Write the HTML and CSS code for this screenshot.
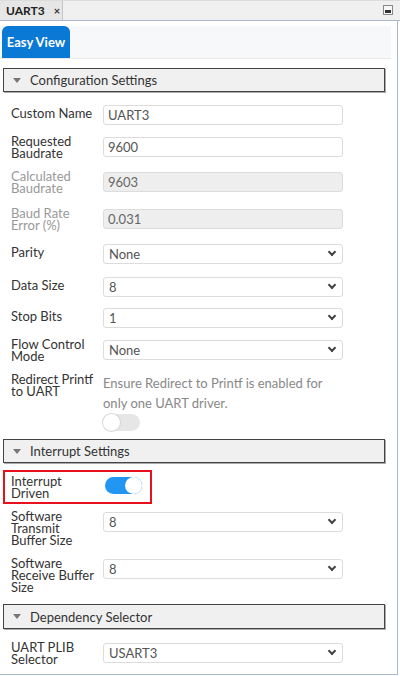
FILE: index.html
```html
<!DOCTYPE html>
<html>
<head>
<meta charset="utf-8">
<link rel="stylesheet" href="styles.css">
</head>
<body>
<div class="window">
  <div class="tabbar">
    <div class="tab"><span>UART3</span><span class="close">×</span></div>
    <div class="spacer"></div>
    <div class="minbtn"><span></span></div>
  </div>
  <div class="panel">
    <div class="viewbar"><div class="easyview">Easy View</div></div>

    <div class="section s-config"><span class="tri"></span>Configuration Settings</div>
    <div class="row g13"><div class="label one">Custom Name</div><div class="field">UART3</div></div>
    <div class="row g10"><div class="label">Requested Baudrate</div><div class="field f2">9600</div></div>
    <div class="row g11"><div class="label dis">Calculated Baudrate</div><div class="field f2 disabled">9603</div></div>
    <div class="row g13"><div class="label dis">Baud Rate Error (%)</div><div class="field f2 disabled">0.031</div></div>
    <div class="row g13"><div class="label one">Parity</div><div class="field select">None<i class="chev"></i></div></div>
    <div class="row g13"><div class="label one">Data Size</div><div class="field select">8<i class="chev"></i></div></div>
    <div class="row g11"><div class="label one">Stop Bits</div><div class="field select">1<i class="chev"></i></div></div>
    <div class="row g10"><div class="label">Flow Control Mode</div><div class="field select f2">None<i class="chev"></i></div></div>
    <div class="row g11"><div class="label">Redirect Printf to UART</div>
      <div class="redirect"><div class="help">Ensure Redirect to Printf is enabled for only one UART driver.</div><div class="toggle off"><span></span></div></div>
    </div>

    <div class="section s-int"><span class="tri"></span>Interrupt Settings</div>
    <div class="highlight"><div class="label">Interrupt Driven</div><div class="toggle on"><span></span></div></div>
    <div class="row g6"><div class="label">Software Transmit Buffer Size</div><div class="field select f2">8<i class="chev"></i></div></div>
    <div class="row g11"><div class="label">Software Receive Buffer Size</div><div class="field select f2">8<i class="chev"></i></div></div>

    <div class="section s-dep"><span class="tri"></span>Dependency Selector</div>
    <div class="row g12"><div class="label">UART PLIB Selector</div><div class="field select f2">USART3<i class="chev"></i></div></div>
  </div>
</div>
</body>
</html>
```
FILE: styles.css
```css
* { box-sizing: border-box; }
html, body { margin: 0; padding: 0; background: #fff; }
body { font-family: "Lato", "Open Sans", sans-serif; font-size: 13px; color: #333; }

.window { width: 400px; height: 676px; position: relative; }

.tabbar {
  height: 21px;
  display: flex;
  background: #f0f0f0;
  border-top: 1px solid #dcdcdc;
  border-bottom: 1px solid #a9bacd;
}
.tab {
  display: flex;
  align-items: center;
  gap: 9px;
  padding: 0 6px 0 6px;
  background: #e6e6e6;
  border-right: 1px solid #c4c4c4;
  font-weight: bold;
  font-size: 12px;
  color: #222;
  width: 63px;
}
.tab .close { font-size: 11px; font-weight: bold; color: #333; }
.spacer { flex: 1; }
.minbtn {
  width: 10px; height: 10px;
  margin: 4px 7px 0 0;
  border: 1px solid #888;
  background: #f8f8f8;
  position: relative;
}
.minbtn span {
  position: absolute; left: 1px; right: 1px; bottom: 1px; height: 3px; background: #333;
}

.panel {
  width: 398px;
  height: 654px;
  border-right: 1px solid #a9bacd;
  border-bottom: 1px solid #a9bacd;
  padding-top: 5px;
}

.viewbar {
  width: 391px;
  height: 33px;
  background: #f6f8fa;
  border-bottom: 1px solid #e6e8ea;
  display: flex;
  align-items: flex-end;
}
.easyview {
  margin-left: 2px;
  width: 68px;
  height: 32px;
  background: #0a79d6;
  color: #fff;
  font-weight: bold;
  font-size: 13px;
  border-radius: 6px 6px 0 0;
  display: flex;
  align-items: center;
  justify-content: center;
}

.section {
  margin-left: 3px;
  width: 382px;
  height: 24px;
  background: #f0f0f0;
  border: 1px solid #444;
  box-shadow: 1px 1px 0 #aaa;
  display: flex;
  align-items: center;
  padding-left: 9px;
  font-size: 13px;
  color: #333;
}
.s-config { margin-top: 9px; }
.s-int { margin-top: 8px; }
.s-dep { margin-top: 11px; height: 25px; }
.tri {
  width: 0; height: 0;
  border-left: 4px solid transparent;
  border-right: 4px solid transparent;
  border-top: 5px solid #777;
  margin-right: 9px;
}

.row { display: flex; align-items: flex-start; padding-left: 11px; }
.g6 { margin-top: 6px; }
.g10 { margin-top: 10px; }
.g11 { margin-top: 11px; }
.g12 { margin-top: 12px; }
.g13 { margin-top: 13px; }
.g14 { margin-top: 14px; }

.label {
  width: 92px;
  line-height: 12px;
  font-size: 13px;
  color: #333;
  padding-right: 6px;
}
.label.one { padding-top: 2px; }
.label.dis { color: #999; }

.field {
  width: 240px;
  height: 20px;
  border: 1px solid #dcdcdc;
  border-radius: 3px;
  background: #fff;
  padding-left: 4px;
  display: flex;
  align-items: center;
  font-size: 13px;
  color: #555;
  position: relative;
}
.field.f2 { margin-top: 2px; }
.field.disabled { background: #eeeeee; color: #666; }
.select { padding-left: 5px; }
.chev {
  position: absolute;
  right: 7px;
  top: 4px;
  width: 6px; height: 6px;
  border-right: 2px solid #444;
  border-bottom: 2px solid #444;
  transform: rotate(45deg);
}

.redirect { width: 240px; padding-top: 0; }
.help { color: #888; line-height: 20px; font-size: 13px; }
.toggle {
  width: 37px; height: 17px;
  border-radius: 9px;
  position: relative;
}
.redirect .toggle { margin-top: 1px; }
.toggle span {
  position: absolute;
  top: 0;
  width: 17px; height: 17px;
  border-radius: 50%;
  background: #fff;
}
.toggle.off { background: #e6e6e6; }
.toggle.off span { left: 0; box-shadow: 0 0 0 1px #d6d6d6; }
.toggle.on { background: #2196f3; }
.toggle.on span { right: 0; box-shadow: 0 0 1px 1px rgba(0,0,0,0.04); }

.highlight {
  margin-top: 7px;
  margin-left: 3px;
  width: 149px;
  height: 34px;
  border: 2px solid #e8101c;
  display: flex;
  align-items: center;
  padding-left: 6px;
}
.highlight .label { width: 94px; }
.highlight .toggle { margin-top: -3px; }
```
